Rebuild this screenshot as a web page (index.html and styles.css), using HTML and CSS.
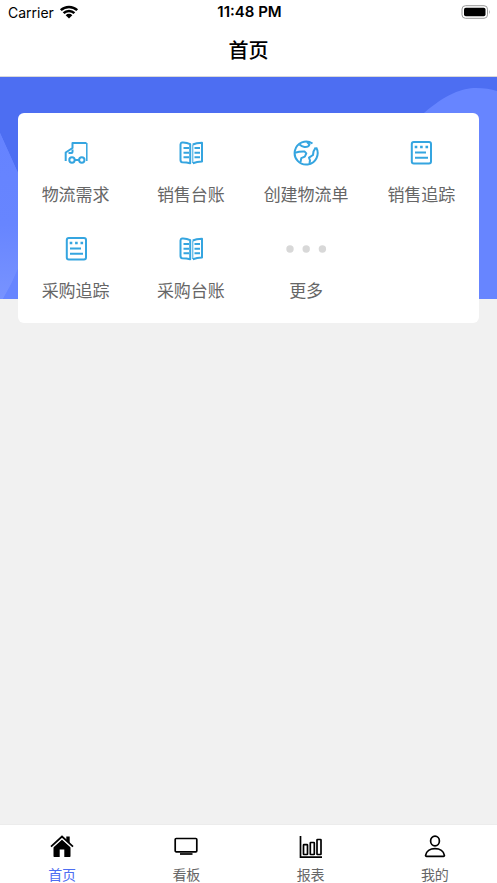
FILE: index.html
```html
<!DOCTYPE html>
<html lang="zh-CN">
<head>
<meta charset="utf-8">
<meta name="viewport" content="width=device-width, initial-scale=1">
<title>首页</title>
<link rel="stylesheet" href="styles.css">
</head>
<body>
<svg class="sprite" aria-hidden="true">
  <symbol id="truck" viewBox="0 0 28 28">
    <path d="M3.700 22v-8.500L10.500 9V4h14"/><path d="M24.800 4v18" stroke-width="1.500"/><path d="M10.500 10.500v2.500q0 1-1 1h-3"/>
    <circle cx="10" cy="21" r="2.700"/><circle cx="19.800" cy="21" r="2.700"/><path d="M12.700 21h4.400"/>
  </symbol>
  <symbol id="book" viewBox="0 0 28 28">
    <path d="M13.200 5.200Q9.500 3.200 5 3.500 3.500 3.700 3.500 5.500V21q0 2 1.700 2.200 4.500 0 8 1z"/>
    <path d="M15.800 5.500Q19 4 25 3.800v18.700q-5 0-9.200 1.700"/><path d="M15.800 5.500V24" stroke-width="1"/>
    <path d="M6.500 9H12M6.500 13.700H12M6.500 18.300H12M17.500 9H23M17.500 13.700H23M17.500 18.300H23"/>
  </symbol>
  <symbol id="globe" viewBox="0 0 28 28">
    <path d="M20.500 4.500A11.500 11.500 0 1 0 24.200 8.500"/>
    <path d="M7.500 5.500q2.200 2 5 2.500 4 .3 5-2.500l-2.500-2.500"/>
    <path d="M3 13.800q5-1.500 9.700-1.200l1.600 1.800-1.500 3.200-3.500 1.500-.8 4"/>
    <path d="M23.700 8.500l-2.200 4-.5 3.500-4 2.700 1 2.800-.5 2.500"/>
  </symbol>
  <symbol id="list" viewBox="0 0 28 28">
    <rect x="4.800" y="3" width="19.200" height="21.500" rx="2"/>
    <path d="M7.700 8h2.600M13.100 8h2.600M18.500 8h2.600" stroke-width="2.600"/><path d="M8 13.500h11M8 18.800h13"/>
  </symbol>
</svg>

<header class="header">
  <div class="status">
    <span class="carrier">Carrier
      <svg class="wifi" viewBox="0 0 20 14" aria-hidden="true"><path d="M1.800 5.200a11.800 11.800 0 0 1 16.400 0M4.600 8.200a7.700 7.700 0 0 1 10.800 0"/><path class="solid" d="M6.700 10.200a4.700 4.700 0 0 1 6.600 0L10 13.500z"/></svg>
    </span>
    <time class="clock">11:48 PM</time>
    <svg class="battery" viewBox="0 0 30 14" aria-hidden="true"><rect class="shell" x="1" y=".7" width="25.500" height="12.600" rx="3.500"/><rect x="3" y="2.700" width="21.500" height="8.600" rx="1.800"/><path class="tip" d="M28 4.800q1.500 2.200 0 4.400z"/></svg>
  </div>
  <h1 class="title">首页</h1>
</header>

<main class="content">
  <svg class="banner" viewBox="0 0 497 222" preserveAspectRatio="none" aria-hidden="true">
    <defs>
      <linearGradient id="leaf" x1="0" y1="0" x2="0" y2="1"><stop offset="0" stop-color="#6583ff"/><stop offset=".55" stop-color="#6785ff"/><stop offset="1" stop-color="#7893ff"/></linearGradient>
    </defs>
    <path fill="#4d6ef2" d="M0 0h497v222H0z"/>
    <path fill="#6785ff" d="M0 56L18 96 60 222H0zM424 36C446 17 462 11 476 11Q488 11 497 14V222H260V180z"/>
    <path fill="url(#leaf)" d="M0 56L18 96V192Q12 207 3 222H0z"/>
    <path fill="#6785ff" d="M18 192Q12 207 3 222H40z"/>
  </svg>
  <nav class="card" aria-label="功能">
    <a class="entry" href="#"><svg class="icon"><use href="#truck"/></svg><span>物流需求</span></a>
    <a class="entry" href="#"><svg class="icon"><use href="#book"/></svg><span>销售台账</span></a>
    <a class="entry" href="#"><svg class="icon"><use href="#globe"/></svg><span>创建物流单</span></a>
    <a class="entry" href="#"><svg class="icon"><use href="#list"/></svg><span>销售追踪</span></a>
    <a class="entry" href="#"><svg class="icon"><use href="#list"/></svg><span>采购追踪</span></a>
    <a class="entry" href="#"><svg class="icon"><use href="#book"/></svg><span>采购台账</span></a>
    <a class="entry" href="#"><svg class="more" viewBox="0 0 42 28"><circle cx="5" cy="14" r="3.700"/><circle cx="21.200" cy="14" r="3.700"/><circle cx="37.400" cy="14" r="3.700"/></svg><span>更多</span></a>
  </nav>
</main>

<nav class="tabs" aria-label="主导航">
  <a class="tab active" href="#" aria-current="page">
    <svg viewBox="0 0 24 24"><path class="solid" d="M12 4L3.500 12v9.300q0 .7.700.7H9.700v-7.500h4.600V22h5.500q.7 0 .7-.7V12z"/><path d="M1 12.300L12 2.500l11 9.800" stroke="#fff" stroke-width="3.200"/><path class="solid" d="M16.300 1.500h3.400v7l-3.400-3z"/><path d="M1 11.600L12 1.500l11 10.100" stroke-width="1.800"/></svg>
    <span>首页</span></a>
  <a class="tab" href="#">
    <svg viewBox="0 0 24 24"><rect x="1.200" y="3.500" width="21.600" height="13.300" rx="1"/><path d="M6 19h12.500"/></svg>
    <span>看板</span></a>
  <a class="tab" href="#">
    <svg viewBox="0 0 24 24"><path d="M1.500 1v21.200H23"/><rect x="4.500" y="9.700" width="4" height="9.800" rx=".5"/><rect x="11.300" y="7.500" width="4" height="12" rx=".5"/><rect x="18" y="4.500" width="4" height="15" rx=".5"/></svg>
    <span>报表</span></a>
  <a class="tab" href="#">
    <svg viewBox="0 0 24 24"><ellipse cx="12" cy="6" rx="4.400" ry="4.900"/><path d="M3.500 21.300q-1 0-.9-1C3.300 16.300 7 13.600 12 13.600s8.700 2.700 9.400 6.700q.1 1-.9 1z"/></svg>
    <span>我的</span></a>
</nav>
</body>
</html>
```
FILE: styles.css
```css
* {
  box-sizing: border-box;
}

body {
  margin: 0;
  min-height: 100vh;
  display: flex;
  flex-direction: column;
  background: #f1f1f1;
  color: #000;
  font-family: Inter, "Noto Sans CJK SC", sans-serif;
}

a {
  color: inherit;
  text-decoration: none;
}

.sprite {
  position: absolute;
  width: 0;
  height: 0;
}

.header {
  background: #fff;
  border-bottom: 1px solid #d8d8da;
}

.status {
  display: grid;
  grid-template-columns: 1fr auto 1fr;
  align-items: center;
  height: 26px;
  padding: 0 6px 2px 8px;
  font-size: 14px;
}

.carrier {
  display: flex;
  align-items: center;
  gap: 5px;
}

.wifi {
  width: 20px;
  height: 14px;
  fill: none;
  stroke: #000;
  stroke-width: 2.5;
}

.wifi .solid {
  fill: #000;
  stroke: none;
}

.clock {
  font-size: 15px;
  font-weight: 600;
  line-height: 20px;
}

.battery {
  width: 30px;
  height: 14px;
  justify-self: end;
}

.battery .shell {
  fill: none;
  stroke: #999;
}

.battery .tip {
  fill: #999;
}

.title {
  margin: 0;
  font-size: 20px;
  font-weight: 500;
  line-height: 50px;
  text-align: center;
}

.content {
  flex: 1;
  display: grid;
  grid-template-rows: 222px auto;
  align-content: start;
}

.banner {
  grid-area: 1 / 1;
  width: 100%;
  height: 222px;
}

.card {
  grid-area: 1 / 1 / 3 / 2;
  position: relative;
  display: grid;
  grid-template-columns: repeat(4, 1fr);
  margin: 36px 18px 0;
  padding: 26px 0 6px;
  gap: 14px 0;
  background: #fff;
  border-radius: 6px;
}

.entry {
  display: flex;
  flex-direction: column;
  align-items: center;
  gap: 16px;
  height: 82px;
  color: #666;
  font-size: 17px;
  line-height: 24px;
  white-space: nowrap;
}

.icon {
  width: 28px;
  height: 28px;
  fill: none;
  stroke: #35a5e0;
  stroke-width: 2;
  stroke-linejoin: round;
}

.more {
  width: 42px;
  height: 28px;
  fill: #d8d8d8;
}

.tabs {
  display: grid;
  grid-template-columns: repeat(4, 1fr);
  height: 59px;
  padding-top: 10px;
  background: #fff;
  border-top: 1px solid #ececec;
}

.tab {
  display: flex;
  flex-direction: column;
  align-items: center;
  gap: 6px;
  color: #666;
  font-size: 14px;
  line-height: 20px;
}

.tab svg {
  width: 24px;
  height: 24px;
  fill: none;
  stroke: #000;
  stroke-width: 1.7;
}

.tab .solid {
  fill: #000;
  stroke: none;
}

.active {
  color: #4d6ef2;
}
```
